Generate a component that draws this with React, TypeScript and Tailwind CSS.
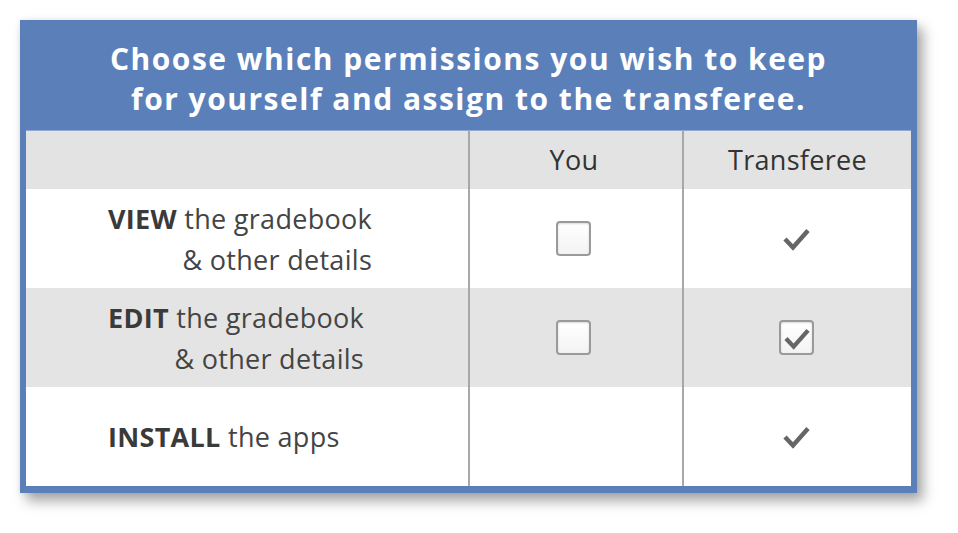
import React from 'react';

const font = { fontFamily: '"Open Sans", "Liberation Sans", sans-serif' };

function Check({ className = '' }: { className?: string }) {
  return (
    <svg width="27" height="24" viewBox="0 0 27 24" className={className}>
      <path d="M2 12 L10 20.5 L25 3.5" fill="none" stroke="#666" strokeWidth="4.5" />
    </svg>
  );
}

function Box({ checked = false }: { checked?: boolean }) {
  return (
    <div className="w-[35px] h-[35px] rounded-[4px] border-2 border-[#9a9a9a] bg-gradient-to-b from-white to-[#f3f3f3] shadow-[inset_0_1px_2px_rgba(0,0,0,0.15)] flex items-center justify-center">
      {checked && <Check className="w-[26px] h-[23px] mt-[2px]" />}
    </div>
  );
}

function Row({
  label,
  you,
  them,
  shaded,
}: {
  label: React.ReactNode;
  you: React.ReactNode;
  them: React.ReactNode;
  shaded?: boolean;
}) {
  return (
    <div className={`flex h-[99px] ${shaded ? 'bg-[#e4e4e4]' : 'bg-white'}`}>
      <div className="w-[442px] flex items-center pl-[82px]">
        <div className="text-right text-[27px] leading-[41px] tracking-[0.3px] text-[#444]">{label}</div>
      </div>
      <div className="w-[214px] border-l-2 border-[#a8a8a8] flex items-center justify-center pr-[6px]">
        {you}
      </div>
      <div className="flex-1 border-l-2 border-[#a8a8a8] flex items-center justify-center pr-[2px]">
        {them}
      </div>
    </div>
  );
}

export default function App() {
  return (
    <div className="min-h-screen bg-white pl-[20px] pt-[20px]" style={font}>
      <div className="w-[897px] bg-[#5b80b9] px-[6px] pb-[7px] shadow-[6px_8px_12px_rgba(0,0,0,0.35),_0_0_6px_rgba(0,0,0,0.08)]">
        <div className="h-[110px] pt-[19px] text-center text-white font-bold text-[30px] leading-[40px] tracking-[1.5px]">
          Choose which permissions you wish to keep
          <br />
          for yourself and assign to the transferee.
        </div>
        <div className="border-t border-[#8fa9d2]">
          <div className="flex h-[58px] bg-[#e3e3e3] text-[27px] tracking-[0.3px] text-[#333]">
            <div className="w-[442px]" />
            <div className="w-[214px] border-l-2 border-[#a8a8a8] flex items-center justify-center pr-[4px]">
              You
            </div>
            <div className="flex-1 border-l-2 border-[#a8a8a8] flex items-center justify-center">
              Transferee
            </div>
          </div>
          <Row
            label={
              <>
                <b className="font-bold text-[#3a3a3a]">VIEW</b> the gradebook
                <br />& other details
              </>
            }
            you={<Box />}
            them={<Check />}
          />
          <Row
            shaded
            label={
              <>
                <b className="font-bold text-[#3a3a3a]">EDIT</b> the gradebook
                <br />& other details
              </>
            }
            you={<Box />}
            them={<Box checked />}
          />
          <Row
            label={
              <>
                <b className="font-bold text-[#3a3a3a]">INSTALL</b> the apps
              </>
            }
            you={null}
            them={<Check />}
          />
        </div>
      </div>
    </div>
  );
}
